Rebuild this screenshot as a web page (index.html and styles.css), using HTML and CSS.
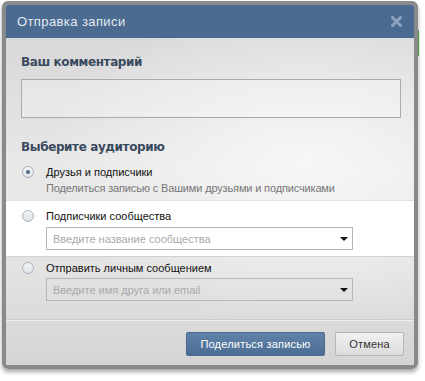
FILE: index.html
```html
<!DOCTYPE html>
<html lang="ru">
<head>
<meta charset="utf-8">
<title>Отправка записи</title>
<link rel="stylesheet" href="styles.css">
</head>
<body>
<div class="page">
  <div class="bg-strip"></div>
  <div class="dialog">
    <div class="header">
      <div class="title">Отправка записи</div>
      <svg class="close" width="11" height="11" viewBox="0 0 11 11"><path d="M1.5 1.5 L9.5 9.5 M9.5 1.5 L1.5 9.5" stroke="#8fa5bf" stroke-width="3" stroke-linecap="round"/></svg>
    </div>
    <div class="body">
      <div class="comment">
        <div class="heading">Ваш комментарий</div>
        <div class="textarea"></div>
      </div>
      <div class="audience">
        <div class="heading">Выберите аудиторию</div>
      </div>
      <div class="option opt-first">
        <span class="radio checked"></span>
        <div class="opt-text">
          <div class="label">Друзья и подписчики</div>
          <div class="hint">Поделиться записью с Вашими друзьями и подписчиками</div>
        </div>
      </div>
      <div class="option opt-white">
        <span class="radio"></span>
        <div class="opt-text">
          <div class="label">Подписчики сообщества</div>
          <div class="select white"><span>Введите название сообщества</span><i class="arrow"></i></div>
        </div>
      </div>
      <div class="option opt-last">
        <span class="radio"></span>
        <div class="opt-text">
          <div class="label">Отправить личным сообщением</div>
          <div class="select"><span>Введите имя друга или email</span><i class="arrow"></i></div>
        </div>
      </div>
      <div class="footer">
        <button class="btn primary">Поделиться записью</button>
        <button class="btn secondary">Отмена</button>
      </div>
    </div>
  </div>
</div>
</body>
</html>
```
FILE: styles.css
```css
html, body {
  margin: 0;
  padding: 0;
  background: #fff;
}
body {
  font-family: "Liberation Sans", Arial, sans-serif;
  font-size: 11px;
  color: #000;
}
.page {
  position: relative;
  padding: 1px 0 0 2px;
  width: 425px;
  height: 381px;
  box-sizing: border-box;
}
.bg-strip {
  position: absolute;
  left: 416px;
  top: 30px;
  width: 3px;
  height: 26px;
  background: #55b04f;
}
.dialog {
  position: relative;
  width: 408px;
  border: 4px solid #8a8a8a;
  border-radius: 6px;
  box-shadow: 0 3px 4px rgba(0,0,0,0.35);
  overflow: hidden;
}
.header {
  height: 33px;
  background: #4b6b90;
  display: flex;
  align-items: center;
  justify-content: space-between;
  padding: 0 12px 0 11px;
}
.title {
  color: #e3eaf2;
  font-size: 13px;
  letter-spacing: 0.4px;
  padding-bottom: 1px;
}
.close {
  display: block;
  margin-top: -1px;
}
.body {
  height: 327px;
  background:
    radial-gradient(ellipse 260px 170px at 300px 120px, rgba(255,255,255,0.65), rgba(255,255,255,0) 100%),
    linear-gradient(#d8d8d8, #e8e8e8 40%, #e3e3e3 70%, #d4d4d4);
  display: flex;
  flex-direction: column;
}
.heading {
  font-family: "DejaVu Sans", sans-serif;
  font-weight: bold;
  font-size: 12px;
  line-height: 16px;
  color: #3a4a5e;
  letter-spacing: -0.4px;
}
.comment {
  padding: 16px 13px 0 15px;
}
.textarea {
  margin-top: 9px;
  height: 37px;
  border: 1px solid #ababab;
  background: rgba(255,255,255,0.25);
}
.audience {
  padding: 21px 15px 0 15px;
}
.option {
  display: flex;
  padding-left: 16px;
}
.radio {
  flex: none;
  box-sizing: border-box;
  width: 12px;
  height: 12px;
  border: 1px solid #aab3bf;
  border-radius: 50%;
  background: linear-gradient(#f3f5f7, #dfe3e8);
  margin-top: 1px;
  margin-right: 12px;
  display: flex;
  align-items: center;
  justify-content: center;
}
.radio.checked::after {
  content: "";
  width: 4px;
  height: 4px;
  border-radius: 50%;
  background: #56697f;
}
.opt-text {
  flex: 1;
}
.label {
  color: #111;
  line-height: 14px;
}
.hint {
  color: #777;
  line-height: 14px;
  margin-top: 2px;
  letter-spacing: -0.15px;
}
.opt-first {
  padding-top: 10px;
  padding-bottom: 5px;
}
.opt-white {
  background: #fff;
  border-top: 1px solid #e3e3e3;
  border-bottom: 1px solid #d2d2d2;
  padding-top: 8px;
  padding-bottom: 6px;
}
.opt-last {
  padding-top: 4px;
  padding-bottom: 18px;
  border-bottom: 1px solid #cacaca;
}
.select {
  margin-top: 4px;
  height: 21px;
  border: 1px solid #b6b6b6;
  display: flex;
  align-items: center;
  justify-content: space-between;
  padding: 0 4px 0 6px;
  width: 295px;
  color: #a9a9a9;
}
.opt-last .select {
  margin-top: 3px;
}
.select.white {
  background: #fff;
}
.arrow {
  width: 0;
  height: 0;
  border-left: 4px solid transparent;
  border-right: 4px solid transparent;
  border-top: 4px solid #111;
}
.footer {
  flex: 1;
  border-top: 1px solid #efefef;
  display: flex;
  justify-content: flex-end;
  align-items: flex-start;
  padding: 11px 10px 0 0;
  gap: 10px;
}
.btn {
  font-family: "Liberation Sans", Arial, sans-serif;
  font-size: 11px;
  letter-spacing: 0.2px;
  height: 24px;
  border-radius: 2px;
  padding: 0;
  cursor: pointer;
}
.primary {
  width: 139px;
  color: #fff;
  background: linear-gradient(#6082a9, #4c6d93);
  border: 1px solid #4a6a8e;
}
.secondary {
  width: 69px;
  color: #333;
  background: linear-gradient(#f1f1f1, #dcdcdc);
  border: 1px solid #b5b5b5;
}
```
